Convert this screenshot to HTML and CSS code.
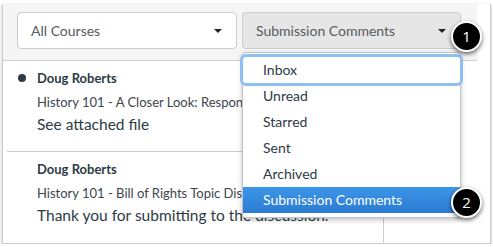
FILE: index.html
```html
<!DOCTYPE html>
<html lang="en">
<head>
  <meta charset="UTF-8">
  <meta name="viewport" content="width=device-width, initial-scale=1.0">
  <title>Conversations</title>
  <link rel="stylesheet" href="styles.css">
</head>
<body>
  <div class="panel">
    <!-- Filtros -->
    <div class="toolbar">
      <div class="select">All Courses<span class="caret"></span></div>
      <div class="select select-open">Submission Comments<span class="caret"></span></div>
    </div>

    <div class="content">
      <ul class="messages">
        <li class="message unread">
          <div class="author">Doug Roberts</div>
          <div class="subject">History 101 - A Closer Look: Response to Reading</div>
          <div class="summary">See attached file</div>
        </li>
        <li class="message">
          <div class="author">Doug Roberts</div>
          <div class="subject">History 101 - Bill of Rights Topic Discussion</div>
          <div class="summary">Thank you for submitting to the discussion.</div>
        </li>
      </ul>
      <div class="detail"></div>
    </div>

    <!-- Menu desplegable -->
    <ul class="menu">
      <li class="focused">Inbox</li>
      <li>Unread</li>
      <li>Starred</li>
      <li>Sent</li>
      <li>Archived</li>
      <li class="selected">Submission Comments</li>
    </ul>

    <span class="badge badge-1">1</span>
    <span class="badge badge-2">2</span>
  </div>
</body>
</html>
```

FILE: styles.css
```css
/* Estilos generales */
body {
  margin: 0;
  padding: 0;
  background-color: #ffffff;
  font-family: Lato, "Open Sans", Arial, sans-serif;
  color: #2d3b45;
}

ul {
  list-style: none;
  margin: 0;
  padding: 0;
}

/* Panel */
.panel {
  position: relative;
  margin: 4px 0 0 2px;
  width: 489px;
  height: 240px;
  box-sizing: border-box;
  border: 1px solid #c7cdd1;
  border-top: none;
  box-shadow: 0 1px 3px rgba(0, 0, 0, 0.25);
  display: flex;
  flex-direction: column;
}

/* Barra de filtros */
.toolbar {
  display: flex;
  gap: 5px;
  height: 57px;
  margin-right: 13px;
  padding: 8px 0 0 14px;
  box-sizing: border-box;
  background-color: #f5f5f5;
  border-bottom: 1px solid #c7cdd1;
  flex-shrink: 0;
}

.select {
  display: flex;
  align-items: center;
  justify-content: space-between;
  width: 220px;
  height: 37px;
  padding: 0 14px 0 13px;
  box-sizing: border-box;
  background-color: #ffffff;
  border: 1px solid #c7cdd1;
  border-radius: 4px;
  font-size: 14px;
  color: #555b61;
}

.select-open {
  width: 219px;
  background-color: #e6e6e6;
}

.caret {
  width: 0;
  height: 0;
  border-left: 4px solid transparent;
  border-right: 4px solid transparent;
  border-top: 4px solid #222;
}

/* Contenido */
.content {
  display: flex;
  flex: 1;
  min-height: 0;
}

.messages {
  width: 380px;
  border-right: 1px solid #c7cdd1;
  overflow: hidden;
}

.message {
  position: relative;
  margin-left: 4px;
  padding: 8px 0 17px 30px;
  border-bottom: 1px solid #c7cdd1;
  white-space: nowrap;
  overflow: hidden;
}

.message:last-child {
  border-bottom: none;
}

.unread::before {
  content: "";
  position: absolute;
  left: 11px;
  top: 13px;
  width: 8px;
  height: 8px;
  border-radius: 50%;
  background-color: #2d3b45;
}

.author {
  font-size: 13px;
  font-weight: bold;
  line-height: 18px;
}

.subject {
  width: 205px;
  overflow: hidden;
  margin-top: 6px;
  font-size: 13px;
  line-height: 18px;
  color: #3d454c;
}

.summary {
  margin-top: 3px;
  font-size: 15.5px;
  line-height: 20px;
}

/* Menu desplegable */
.menu {
  position: absolute;
  left: 239px;
  top: 48px;
  width: 219px;
  padding: 4px 0;
  box-sizing: border-box;
  background-color: #ffffff;
  border: 1px solid #bfc4c8;
  border-radius: 3px;
  box-shadow: 0 2px 5px rgba(0, 0, 0, 0.25);
}

.menu li {
  height: 26px;
  line-height: 26px;
  padding-left: 20px;
  font-size: 14px;
  color: #2d3b45;
}

.menu .focused {
  border-radius: 3px;
  box-shadow: 0 0 0 3px #8fc0f4;
}

.menu .selected {
  background: linear-gradient(#3c95e8, #2a7cd2);
  color: #ffffff;
}

/* Indicadores numerados */
.badge {
  position: absolute;
  left: 448px;
  width: 27px;
  height: 27px;
  line-height: 27px;
  text-align: center;
  border: 2px solid #ffffff;
  border-radius: 50%;
  background-color: #000000;
  color: #ffffff;
  font-family: "Open Sans", Arial, sans-serif;
  font-size: 15px;
  box-shadow: 0 2px 4px rgba(0, 0, 0, 0.6);
}

.badge-1 {
  top: 17px;
}

.badge-2 {
  top: 183px;
}
```
